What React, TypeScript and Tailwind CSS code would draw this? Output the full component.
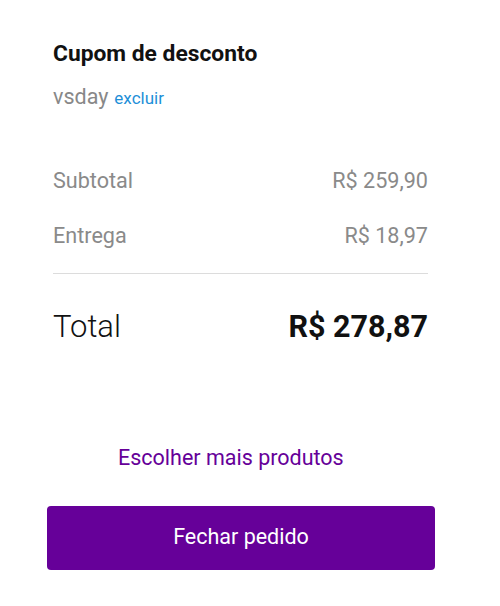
import React from 'react';

const App: React.FC = () => {
  return (
    <div className="w-[500px] h-[606px] bg-white font-['Roboto',sans-serif] px-[53px] pt-[40px] relative">
      {/* Cupom */}
      <div className="flex flex-col">
        <h2 className="text-[22.8px] leading-[28px] font-bold text-[#111]">Cupom de desconto</h2>
        <div className="mt-[13px] flex items-baseline gap-[6px]">
          <span className="text-[21.5px] text-[#888]">vsday</span>
          <button className="text-[17px] text-[#1e8fd8]">excluir</button>
        </div>
      </div>

      {/* Resumo */}
      <div className="mt-[53px] w-[375px] flex flex-col text-[21.6px] text-[#8a8a8a]">
        <div className="flex justify-between h-[30px] items-center">
          <span>Subtotal</span>
          <span>R$ 259,90</span>
        </div>
        <div className="flex justify-between h-[30px] items-center mt-[25px]">
          <span>Entrega</span>
          <span>R$ 18,97</span>
        </div>
        <div className="mt-[22px] border-t border-[#dcdcdc]" />
        <div className="flex justify-between items-center h-[40px] mt-[33px] text-[#111]">
          <span className="text-[31px] font-light">Total</span>
          <span className="text-[30.5px] font-bold">R$ 278,87</span>
        </div>
      </div>

      {/* Ações */}
      <div className="mt-[95px] flex">
        <a href="#" className="ml-[65px] text-[21.5px] text-[#660099]">Escolher mais produtos</a>
      </div>
      <button className="mt-[31px] -ml-[6px] w-[388px] h-[64px] rounded-[4px] bg-[#660099] text-white text-[21.5px]">
        Fechar pedido
      </button>
    </div>
  );
};

export default App;
